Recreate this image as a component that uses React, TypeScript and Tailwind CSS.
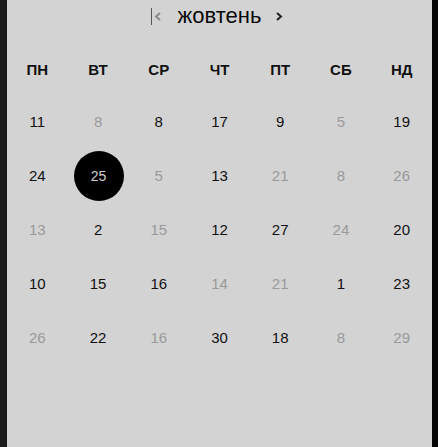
import React from "react";

type Day = { n: number; muted?: boolean; selected?: boolean };

const weekdays = ["ПН", "ВТ", "СР", "ЧТ", "ПТ", "СБ", "НД"];

const weeks: Day[][] = [
  [{ n: 11 }, { n: 8, muted: true }, { n: 8 }, { n: 17 }, { n: 9 }, { n: 5, muted: true }, { n: 19 }],
  [{ n: 24 }, { n: 25, selected: true }, { n: 5, muted: true }, { n: 13 }, { n: 21, muted: true }, { n: 8, muted: true }, { n: 26, muted: true }],
  [{ n: 13, muted: true }, { n: 2 }, { n: 15, muted: true }, { n: 12 }, { n: 27 }, { n: 24, muted: true }, { n: 20 }],
  [{ n: 10 }, { n: 15 }, { n: 16 }, { n: 14, muted: true }, { n: 21, muted: true }, { n: 1 }, { n: 23 }],
  [{ n: 26, muted: true }, { n: 22 }, { n: 16, muted: true }, { n: 30 }, { n: 18 }, { n: 8, muted: true }, { n: 29, muted: true }],
];

function Chevron({ dir, className }: { dir: "left" | "right"; className: string }) {
  return (
    <svg width="8" height="9" viewBox="0 0 8 9" className={className}>
      <path
        d={dir === "left" ? "M6 1 L2 4.5 L6 8" : "M2 1 L6 4.5 L2 8"}
        fill="none"
        stroke="currentColor"
        strokeWidth="2"
      />
    </svg>
  );
}

export default function App() {
  return (
    <div className="flex w-[438px] h-[447px] font-['Liberation_Sans',Arial,sans-serif]">
      <div className="w-[7px] bg-[#1b1b1b]" />
      <div className="flex-1 bg-[#d3d3d3] flex flex-col">
        <div className="h-[32px] flex items-center justify-center pr-[5px]">
          <button className="flex items-center">
            <span className="w-[1px] h-[17px] bg-[#555]" />
            <Chevron dir="left" className="ml-[2px] text-[#8a8a8a]" />
          </button>
          <span className="ml-[16px] mr-[14px] text-[22px] leading-none text-[#0a0a0a] pb-[1px]">жовтень</span>
          <button className="flex items-center">
            <Chevron dir="right" className="text-[#222]" />
          </button>
        </div>

        <div className="mt-[18px] grid grid-cols-7 h-[40px] items-center">
          {weekdays.map((w) => (
            <div key={w} className="text-center text-[15px] font-bold text-[#111]">
              {w}
            </div>
          ))}
        </div>

        <div className="pt-[5px]">
          {weeks.map((week, i) => (
            <div key={i} className="grid grid-cols-7 h-[54px] items-center">
              {week.map((d, j) => (
                <div key={j} className="flex justify-center">
                  {d.selected ? (
                    <span className="w-[50px] h-[50px] rounded-full bg-black flex items-center justify-center text-[14px] text-[#cfcfcf] ml-[1px]">
                      {d.n}
                    </span>
                  ) : (
                    <span className={`text-[15px] ${d.muted ? "text-[#9a9a9a]" : "text-[#111]"}`}>{d.n}</span>
                  )}
                </div>
              ))}
            </div>
          ))}
        </div>
      </div>
      <div className="w-[6px] bg-[#060606]" />
    </div>
  );
}
